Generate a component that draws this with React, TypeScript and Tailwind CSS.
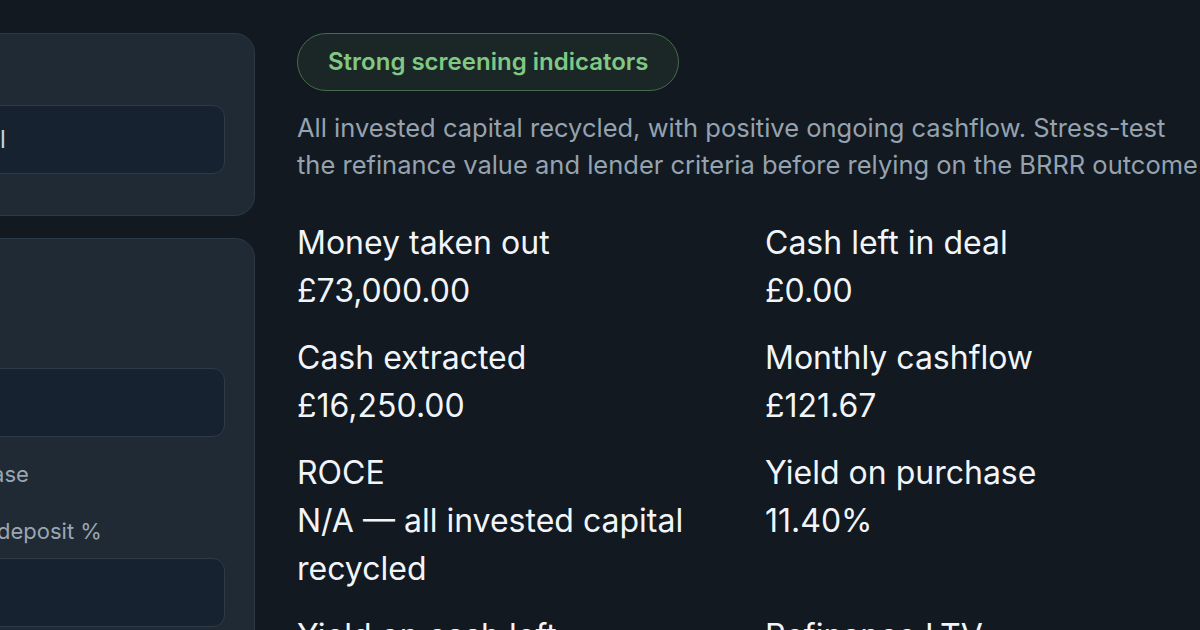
import React from "react";

const metrics = [
  { label: "Money taken out", value: "£73,000.00" },
  { label: "Cash left in deal", value: "£0.00" },
  { label: "Cash extracted", value: "£16,250.00" },
  { label: "Monthly cashflow", value: "£121.67" },
  { label: "ROCE", value: "N/A — all invested capital recycled" },
  { label: "Yield on purchase", value: "11.40%" },
  { label: "Yield on cash left", value: "N/A" },
  { label: "Refinance LTV", value: "75.00%" },
];

function Field({ value }: { value: string }) {
  return (
    <div className="h-[69px] rounded-xl border border-[#2d3b49] bg-[#172230] px-4 flex items-center text-[24px] text-[#c9d2dc]">
      {value}
    </div>
  );
}

export default function App() {
  return (
    <div
      className="w-[1200px] h-[630px] overflow-hidden bg-[#121920] flex gap-[42px] pt-[33px]"
      style={{ fontFamily: "Inter, 'Noto Sans', sans-serif" }}
    >
      {/* Inputs sidebar, mostly off-screen */}
      <div className="ml-[-140px] w-[395px] shrink-0 flex flex-col gap-[22px]">
        <div className="rounded-[20px] border border-[#2b3845] bg-[#1f2a35] px-[29px] pt-[22px] pb-[41px]">
          <div className="text-[22px] leading-[33px] text-[#9aa6b2] mb-[16px]">Type</div>
          <Field value="Personal" />
        </div>
        <div className="rounded-[20px] border border-[#2b3845] bg-[#1f2a35] px-[29px] pt-[28px] pb-[30px]">
          <div className="text-[24px] font-semibold leading-[33px] text-[#e5e9ee] mb-[23px]">Finance</div>
          <div className="text-[22px] leading-[33px] text-[#9aa6b2] mb-[12px]">Price</div>
          <Field value="90,000" />
          <div className="mt-[21px] text-[22px] leading-[33px] text-[#9aa6b2]">Full purchase</div>
          <div className="text-[22px] leading-[33px] text-[#9aa6b2] mt-[24px] mb-[10px]">Mortgage deposit %</div>
          <Field value="25" />
        </div>
      </div>

      {/* Results */}
      <div className="w-[904px] shrink-0 text-[#f1f5f9]">
        <div className="inline-flex h-[58px] items-center rounded-full border border-[#456a4c] bg-[#1b2726] px-[30px] text-[24px] font-semibold text-[#80c883]">
          Strong screening indicators
        </div>
        <p className="mt-[18px] whitespace-nowrap text-[25.5px] leading-[37px] text-[#95a2af]">
          All invested capital recycled, with positive ongoing cashflow. Stress-test
          <br />
          the refinance value and lender criteria before relying on the BRRR outcome.
        </p>
        <div className="mt-[36px] grid grid-cols-2 gap-x-8 gap-y-[19px]">
          {metrics.map((m) => (
            <div key={m.label} className="text-[32px] leading-[48px]">
              <div>{m.label}</div>
              <div>{m.value}</div>
            </div>
          ))}
        </div>
      </div>
    </div>
  );
}
